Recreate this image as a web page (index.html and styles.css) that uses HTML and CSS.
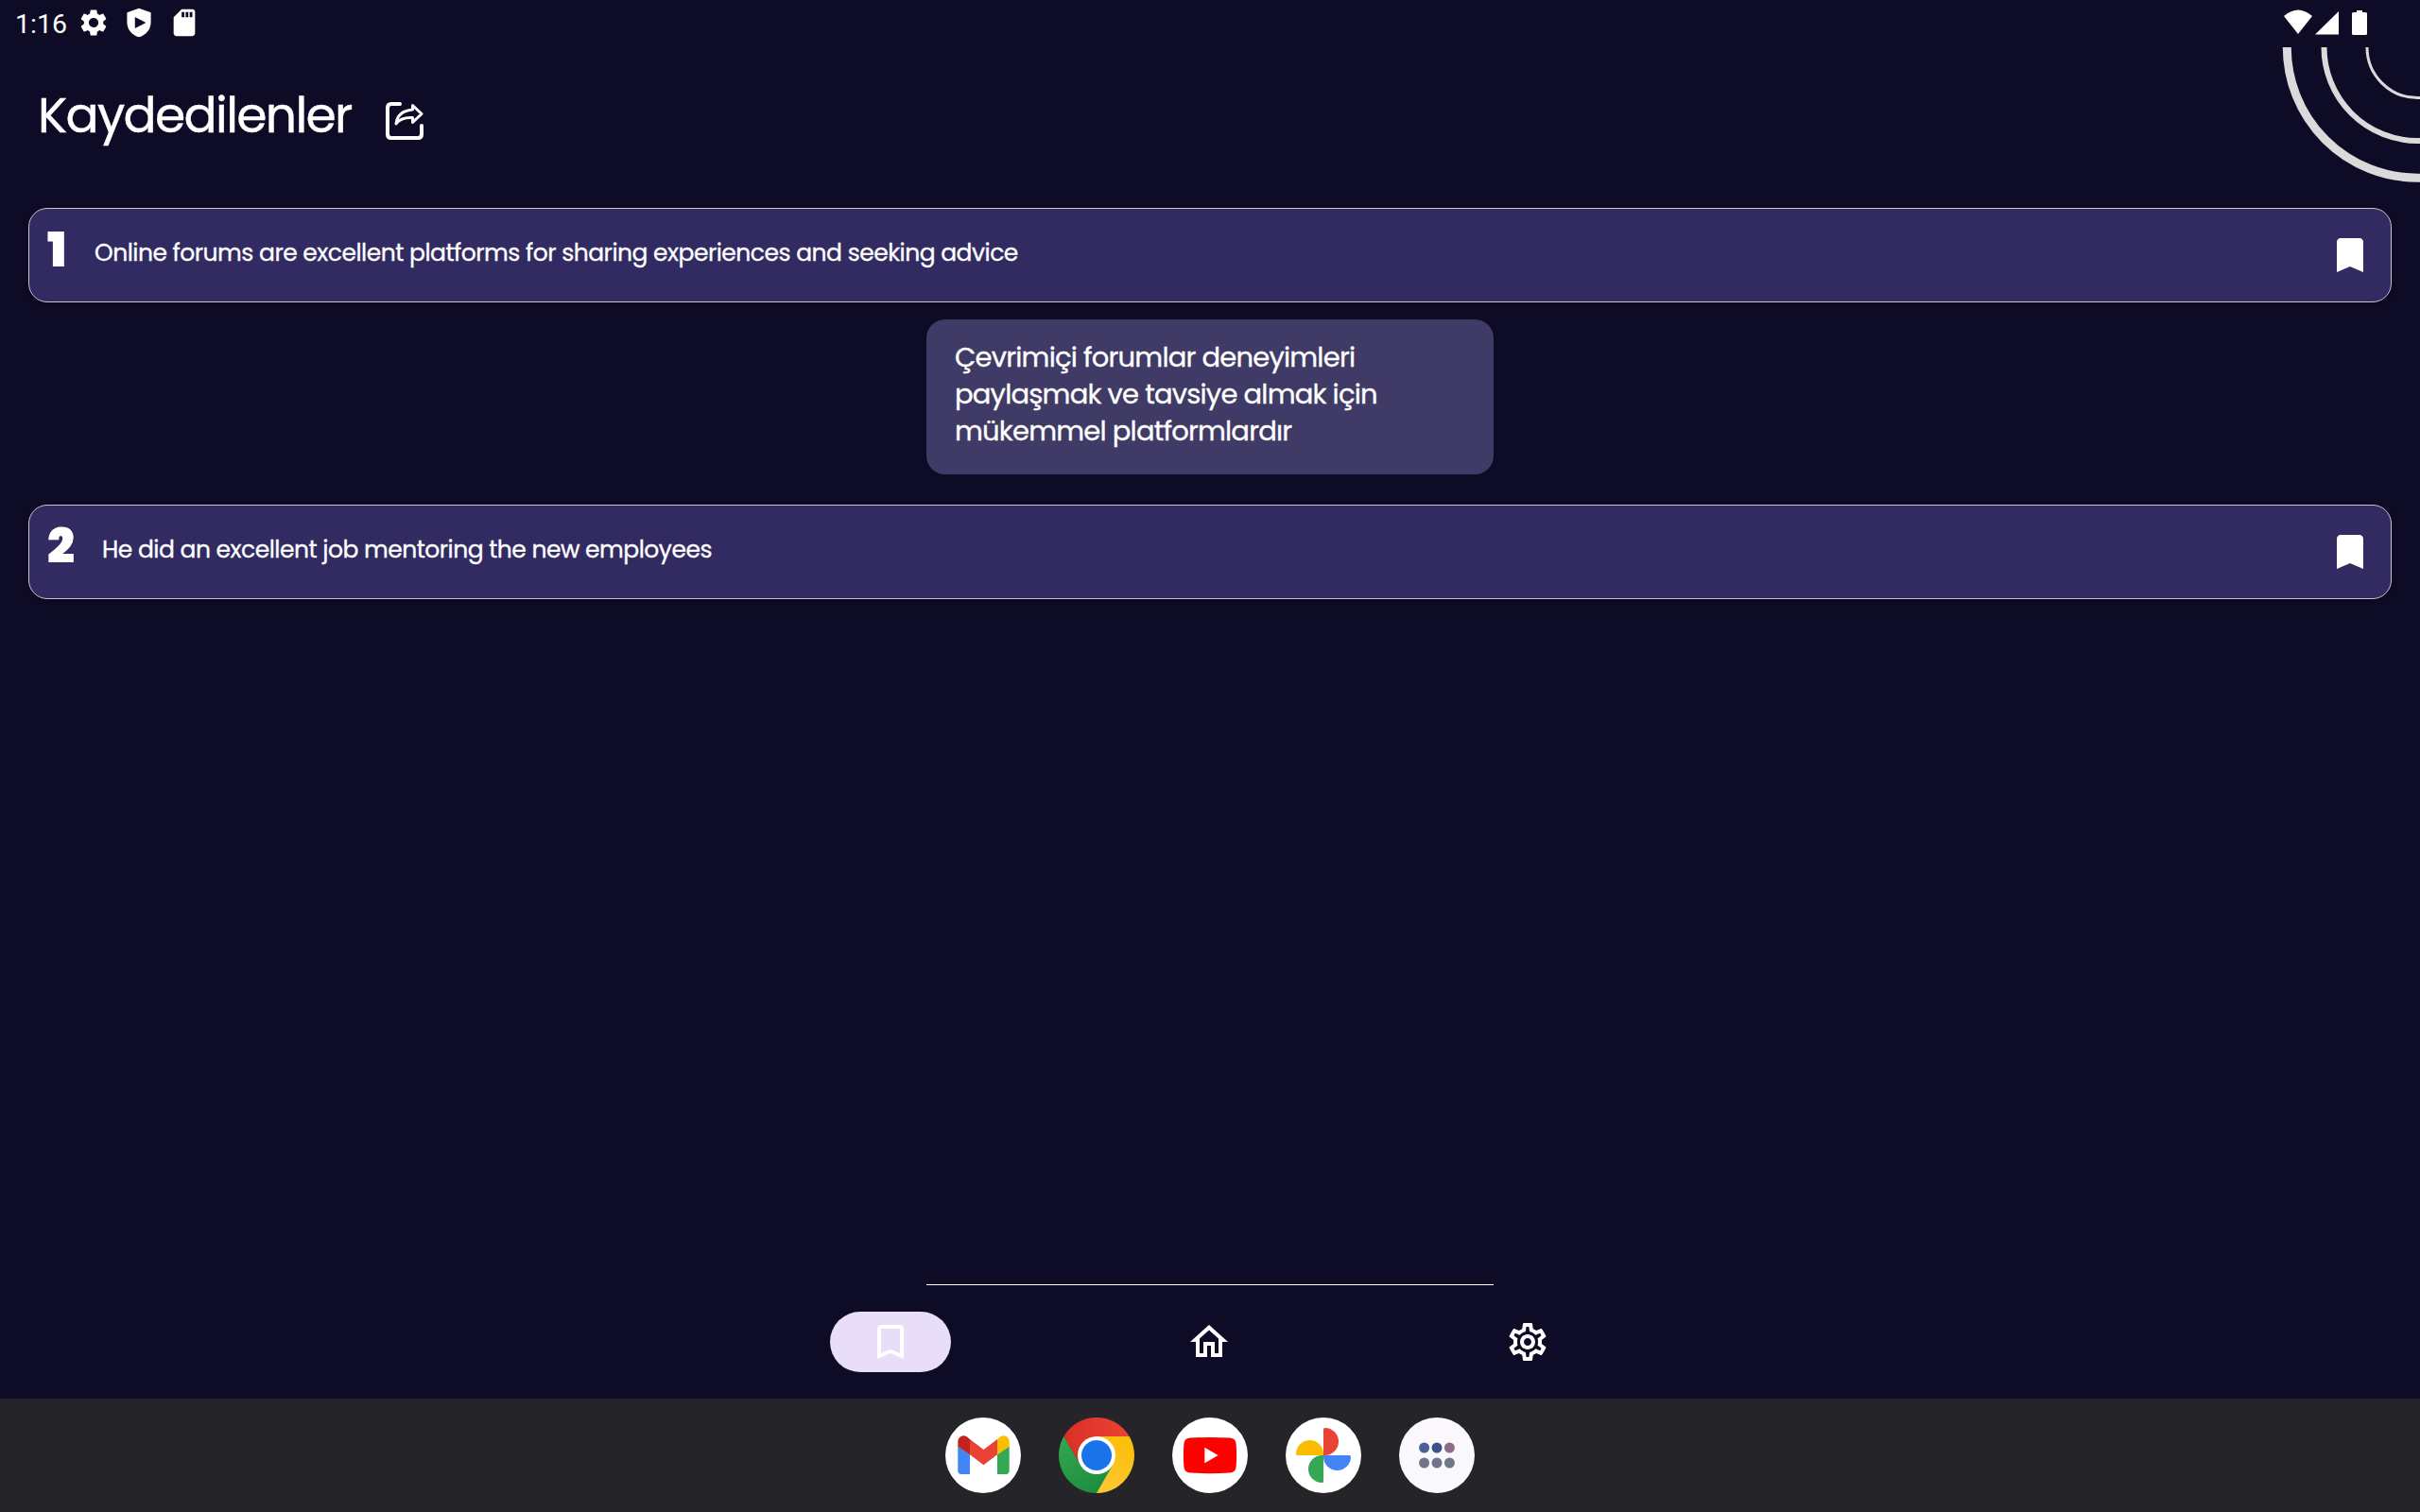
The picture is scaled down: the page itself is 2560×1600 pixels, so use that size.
FILE: index.html
```html
<!DOCTYPE html>
<html lang="tr">
<head>
<meta charset="utf-8">
<title>Kaydedilenler</title>
<link rel="stylesheet" href="styles.css">
</head>
<body>
<div class="screen">
  <header class="status">
    <span class="clock">1:16</span>
    <div class="status-left">
      <svg class="s-icon" viewBox="0 0 24 24"><path d="M19.14 12.94c.04-.3.06-.61.06-.94 0-.32-.02-.64-.07-.94l2.03-1.58a.49.49 0 0 0 .12-.61l-1.92-3.32a.488.488 0 0 0-.59-.22l-2.39.96c-.5-.38-1.03-.7-1.62-.94l-.36-2.54a.484.484 0 0 0-.48-.41h-3.84c-.24 0-.43.17-.47.41l-.36 2.54c-.59.24-1.13.57-1.62.94l-2.39-.96c-.22-.08-.47 0-.59.22L2.74 8.87c-.12.21-.08.47.12.61l2.03 1.58c-.05.3-.09.63-.09.94s.02.64.07.94l-2.03 1.58a.49.49 0 0 0-.12.61l1.92 3.32c.12.22.37.29.59.22l2.39-.96c.5.38 1.03.7 1.62.94l.36 2.54c.05.24.24.41.48.41h3.84c.24 0 .44-.17.47-.41l.36-2.54c.59-.24 1.13-.56 1.62-.94l2.39.96c.22.08.47 0 .59-.22l1.92-3.32c.12-.22.07-.47-.12-.61l-2.01-1.58zM12 15.6A3.61 3.61 0 0 1 8.4 12c0-1.98 1.62-3.6 3.6-3.6s3.6 1.62 3.6 3.6-1.62 3.6-3.6 3.6z"/></svg>
      <svg class="s-icon" viewBox="0 0 24 24"><path fill-rule="evenodd" d="M12 1.2 3.1 4.4v7.2c0 5.500 3.800 9.700 8.900 11.200 5.100-1.500 8.900-5.700 8.900-11.200V4.400zM9 7.800l8.200 4.200L9 16.200z"/></svg>
      <svg class="s-icon" viewBox="0 0 24 24"><path d="M18 2h-8L4.020 8 4 20c0 1.100.9 2 2 2h12c1.100 0 2-.9 2-2V4c0-1.100-.9-2-2-2zm-6 6h-2V4h2v4zm3 0h-2V4h2v4zm3 0h-2V4h2v4z"/></svg>
    </div>
    <svg class="status-right" viewBox="0 0 90 28"><path d="M0 7Q15-6 30 7L15 26zM33 26.500 58 2v24.500zM77 1h6v2h3.500q1.500 0 1.500 1.500V25.500q0 1.500-1.500 1.500h-13Q72 27 72 25.500V4.500Q72 3 73.500 3H77z"/></svg>
  </header>
  <svg class="arcs" viewBox="0 0 150 150"><circle cx="147.500" cy="0" r="138.200" stroke-width="9"/><circle cx="147.500" cy="0" r="99" stroke-width="6"/><circle cx="147.500" cy="0" r="53.500" stroke-width="3"/></svg>

  <div class="title-bar">
    <h1 class="title">Kaydedilenler</h1>
    <svg class="share" viewBox="0 0 40 40"><path stroke-width="4" stroke-linecap="round" d="M15 2H6Q2 2 2 6v28q0 4 4 4h28q4 0 4-4v-9"/><path stroke-width="3" d="M28.500 3.500 38 12.500l-9.500 9v-5c-8-.4-14 1.500-17.500 6.500 1-9 7.500-14 17.500-15z"/></svg>
  </div>

  <main class="list">
    <div class="row">
      <span class="num">1</span>
      <span class="sentence">Online forums are excellent platforms for sharing experiences and seeking advice</span>
      <svg class="icon" viewBox="0 0 24 24"><path d="M17 3H7c-1.100 0-2 .9-2 2v16l7-3 7 3V5c0-1.100-.9-2-2-2z"/></svg>
    </div>
    <div class="translation">Çevrimiçi forumlar deneyimleri<br>paylaşmak ve tavsiye almak için<br>mükemmel platformlardır</div>
    <div class="row">
      <span class="num two">2</span>
      <span class="sentence">He did an excellent job mentoring the new employees</span>
      <svg class="icon" viewBox="0 0 24 24"><path d="M17 3H7c-1.100 0-2 .9-2 2v16l7-3 7 3V5c0-1.100-.9-2-2-2z"/></svg>
    </div>
  </main>

  <div class="divider"></div>
  <nav class="nav">
    <div class="tab active"><svg class="icon" viewBox="0 0 24 24"><path d="M17 3H7c-1.100 0-2 .9-2 2v16l7-3 7 3V5c0-1.100-.9-2-2-2zm0 15-5-2.180L7 18V5h10v13z"/></svg></div>
    <div class="tab"><svg class="icon" viewBox="0 0 24 24"><path d="M12 5.690l5 4.500V18h-2v-6H9v6H7v-7.810l5-4.500M12 3 2 12h3v8h6v-6h2v6h6v-8h3L12 3z"/></svg></div>
    <div class="tab"><svg class="icon" viewBox="0 0 24 24"><path d="M19.430 12.980c.04-.32.07-.64.07-.98s-.03-.66-.07-.98l2.110-1.650c.19-.15.24-.42.12-.64l-2-3.460a.5.5 0 0 0-.61-.22l-2.490 1c-.52-.4-1.080-.73-1.690-.98l-.38-2.650A.488.488 0 0 0 14 2h-4c-.25 0-.46.18-.49.42l-.38 2.650c-.61.25-1.170.59-1.690.98l-2.490-1a.566.566 0 0 0-.18-.03c-.17 0-.34.09-.43.25l-2 3.460c-.13.22-.07.49.12.64l2.110 1.650c-.04.32-.07.65-.07.98s.03.66.07.98l-2.110 1.650c-.19.15-.24.42-.12.64l2 3.460a.5.5 0 0 0 .61.22l2.490-1c.52.4 1.080.73 1.690.98l.38 2.650c.03.24.24.42.49.42h4c.25 0 .46-.18.49-.42l.38-2.650c.61-.25 1.170-.59 1.690-.98l2.490 1c.06.02.12.03.18.03.17 0 .34-.09.43-.25l2-3.460c.12-.22.07-.49-.12-.64l-2.110-1.650zm-1.980-1.710c.04.31.05.52.05.73s-.02.43-.05.73l-.14 1.130.89.7 1.080.84-.7 1.210-1.270-.51-1.040-.42-.9.68c-.43.32-.84.56-1.250.73l-1.060.43-.16 1.130-.2 1.350h-1.400l-.19-1.350-.16-1.130-1.060-.43c-.43-.18-.83-.41-1.230-.71l-.91-.7-1.060.43-1.270.51-.7-1.210 1.080-.84.89-.7-.14-1.130c-.03-.31-.05-.54-.05-.74s.02-.43.05-.73l.14-1.130-.89-.7-1.080-.84.7-1.210 1.270.51 1.040.42.9-.68c.43-.32.84-.56 1.250-.73l1.060-.43.16-1.130.2-1.350h1.390l.19 1.350.16 1.130 1.060.43c.43.18.83.41 1.230.71l.91.7 1.060-.43 1.270-.51.7 1.210-1.070.85-.89.7.14 1.130zM12 8c-2.210 0-4 1.790-4 4s1.790 4 4 4 4-1.790 4-4-1.790-4-4-4zm0 6c-1.100 0-2-.9-2-2s.9-2 2-2 2 .9 2 2-.9 2-2 2z"/></svg></div>
  </nav>

  <footer class="taskbar">
    <svg class="app" viewBox="0 0 80 80">
      <circle cx="40" cy="40" r="40" fill="#fff"/>
      <path fill="#4285f4" d="M13.300 30.500 26 39v21h-9q-3.700 0-3.700-3.700z"/>
      <path fill="#34a853" d="M67.700 30.500 55 39v21h9q3.700 0 3.700-3.700z"/>
      <path fill="#c5221f" d="M13.300 30.700V25.500c0-5 5.500-8 9.700-4.900L26 23v16.200z"/>
      <path fill="#fbbc04" d="M67.700 30.700V25.500c0-5-5.500-8-9.700-4.900L55 23v16.200z"/>
      <path fill="#ea4335" d="M26 23l14.500 11L55 23v16.200L40.500 50.200 26 39.200z"/>
    </svg>
    <svg class="app" viewBox="0 0 80 80">
      <defs>
        <linearGradient id="cr"><stop stop-color="#d93025"/><stop offset="1" stop-color="#ea4335"/></linearGradient>
        <linearGradient id="cg" x1="0" y1="0" x2=".6" y2="1"><stop stop-color="#34a853"/><stop offset="1" stop-color="#1e8e3e"/></linearGradient>
        <linearGradient id="cy" x1="1" y1="0" x2=".4" y2="1"><stop stop-color="#fbbc04"/><stop offset="1" stop-color="#fcc934"/></linearGradient>
      </defs>
      <path fill="url(#cr)" d="M5.360 20a40 40 0 0 1 69.280 0L40 40 22.700 50z"/>
      <path fill="url(#cy)" d="M40 20h34.640A40 40 0 0 1 40 80L30 60z"/>
      <path fill="url(#cg)" d="M5.360 20A40 40 0 0 0 40 80L57.300 50 40 40 22.700 50z"/>
      <circle cx="40" cy="40" r="20" fill="#fff"/><circle cx="40" cy="40" r="16" fill="#1a73e8"/>
    </svg>
    <svg class="app" viewBox="0 0 80 80">
      <circle cx="40" cy="40" r="40" fill="#fff"/>
      <path fill="#f00" d="M19 21.600q21-1.200 42 0 6 .4 6.600 6.400 1 12 0 24-.6 6-6.600 6.600-21 1.200-42 0-6-.6-6.600-6.600-1-12 0-24 .6-6 6.600-6.400z"/>
      <path fill="#fff" d="M34.300 31.700v16.600L48.700 40z"/>
    </svg>
    <svg class="app" viewBox="0 0 80 80">
      <circle cx="40" cy="40" r="40" fill="#fff"/>
      <path fill="#ea4335" d="M40 40V12.500q0-1.500 1.500-1.500a14.500 14.500 0 0 1 0 29z"/>
      <path fill="#4285f4" d="M40 40h27.500q1.500 0 1.500 1.500a14.500 14.500 0 0 1-29 0z"/>
      <path fill="#34a853" d="M40 40v27.500q0 1.500-1.500 1.500a14.500 14.500 0 0 1 0-29z"/>
      <path fill="#fbbc04" d="M40 40H12.500q-1.500 0-1.500-1.500a14.500 14.500 0 0 1 29 0z"/>
    </svg>
    <svg class="app" viewBox="0 0 80 80">
      <circle cx="40" cy="40" r="40" fill="#faf8fd"/>
      <circle cx="26.600" cy="32" r="5.500" fill="#4a6096"/><circle cx="40" cy="32" r="5.500" fill="#3f5288"/><circle cx="53.400" cy="32" r="5.500" fill="#8f6a8b"/>
      <g fill="#70758a"><circle cx="26.600" cy="48" r="5.500"/><circle cx="40" cy="48" r="5.500"/><circle cx="53.400" cy="48" r="5.500"/></g>
    </svg>
  </footer>
</div>
</body>
</html>
```
FILE: styles.css
```css
* { box-sizing: border-box; }
body {
  margin: 0;
  background: #0e0b26;
  color: #fff;
  font-family: Poppins, Inter, "Open Sans", sans-serif;
}
svg { display: block; fill: #fff; flex: none; }
.screen {
  position: relative;
  width: 2560px;
  height: 1600px;
  display: flex;
  flex-direction: column;
  overflow: hidden;
}
.status { height: 50px; display: flex; align-items: flex-start; padding: 7px 54px 0 16px; }
.clock { width: 66px; padding-top: 1px; font: 28.5px/36px Roboto, sans-serif; white-space: nowrap; }
.status-left { display: flex; gap: 14px; }
.s-icon { width: 34px; height: 34px; }
.status-right { width: 90px; height: 28px; margin: 3px 0 0 auto; overflow: visible; }
.arcs {
  position: absolute;
  top: 50px;
  right: 0;
  width: 150px;
  height: 150px;
  fill: none;
  stroke: #dadada;
}
.title-bar { height: 170px; display: flex; align-items: flex-start; padding: 41px 0 0 40px; }
.title {
  width: 368px;
  margin: 0;
  font-size: 52px;
  line-height: 62px;
  font-weight: 400;
  letter-spacing: -1.68px;
  white-space: nowrap;
  -webkit-text-stroke: .4px #fff;
}
.share { width: 40px; height: 40px; margin-top: 17px; fill: none; stroke: #fff; stroke-linejoin: round; }
.list { padding: 0 30px; display: flex; flex-direction: column; }
.row {
  height: 100px;
  display: flex;
  align-items: flex-start;
  padding: 0 19px;
  background: #312b62;
  border: 1px solid #c9c4d4;
  border-radius: 20px;
  box-shadow: 0 2px 6px rgba(0, 0, 0, .35);
}
.num { width: 50px; margin-top: 12px; font-size: 51px; line-height: 62px; font-weight: 900; }
.num.two { width: 58px; }
.sentence {
  margin-top: 31px;
  font-size: 25px;
  line-height: 32px;
  letter-spacing: -.51px;
  white-space: nowrap;
  -webkit-text-stroke: .3px #fff;
}
.icon { width: 48px; height: 48px; }
.row .icon { margin: 25px 0 0 auto; }
.translation {
  width: 600px;
  height: 164px;
  margin: 18px auto 32px;
  padding: 21px 30px 0;
  background: #403b66;
  border-radius: 20px;
  font-size: 29px;
  line-height: 39px;
  letter-spacing: -.8px;
  white-space: nowrap;
  -webkit-text-stroke: .3px #fff;
}
.divider { width: 600px; height: 1px; margin: 725px auto 0; background: #fff; }
.nav { height: 120px; display: flex; gap: 209px; padding: 28px 0 0 878px; }
.tab { width: 128px; height: 64px; display: flex; align-items: center; justify-content: center; border-radius: 32px; }
.tab.active { background: #e8def8; }
.taskbar { flex: 1; display: flex; justify-content: center; align-items: center; gap: 40px; background: #252429; }
.app { width: 80px; height: 80px; }
```
